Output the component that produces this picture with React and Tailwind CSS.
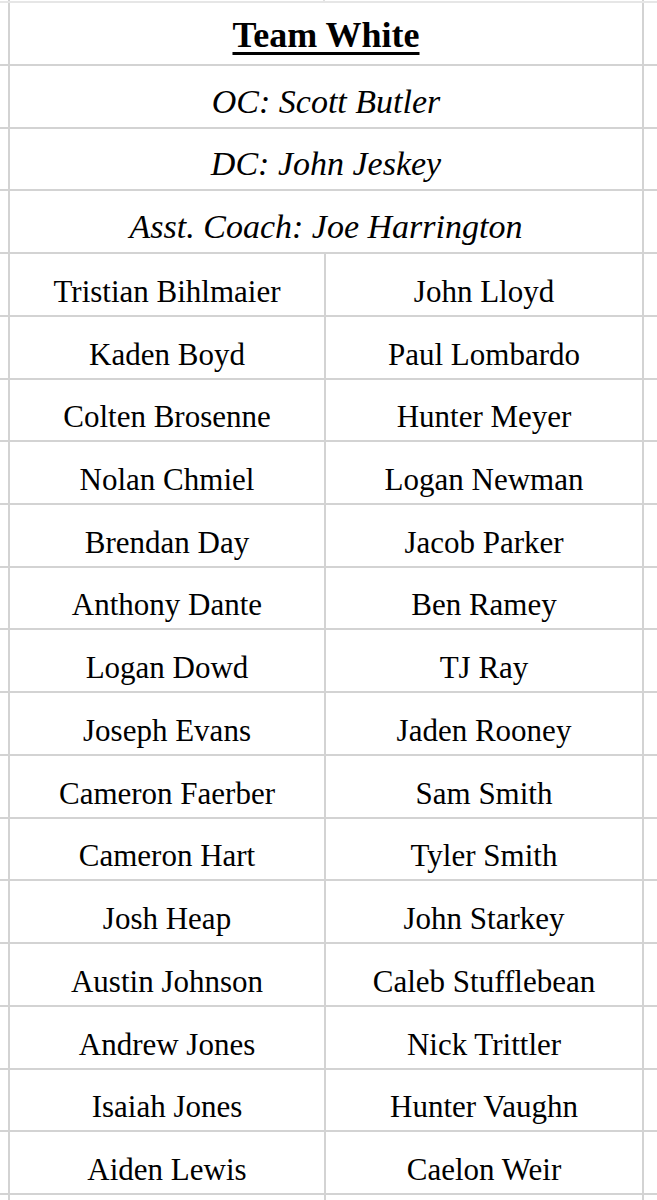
const coaches = ['OC: Scott Butler', 'DC: John Jeskey', 'Asst. Coach: Joe Harrington'];

const players = [
  ['Tristian Bihlmaier', 'John Lloyd'],
  ['Kaden Boyd', 'Paul Lombardo'],
  ['Colten Brosenne', 'Hunter Meyer'],
  ['Nolan Chmiel', 'Logan Newman'],
  ['Brendan Day', 'Jacob Parker'],
  ['Anthony Dante', 'Ben Ramey'],
  ['Logan Dowd', 'TJ Ray'],
  ['Joseph Evans', 'Jaden Rooney'],
  ['Cameron Faerber', 'Sam Smith'],
  ['Cameron Hart', 'Tyler Smith'],
  ['Josh Heap', 'John Starkey'],
  ['Austin Johnson', 'Caleb Stufflebean'],
  ['Andrew Jones', 'Nick Trittler'],
  ['Isaiah Jones', 'Hunter Vaughn'],
  ['Aiden Lewis', 'Caelon Weir'],
];

// one spreadsheet row: stub of the column to the left, the merged cell, stub on the right
function Row({ className = 'h-[62.72px]', children }) {
  return (
    <div className={`flex shrink-0 border-b-2 border-[#d3d3d3] ${className}`}>
      <div className="w-[8px] shrink-0" />
      <div className="flex flex-1 border-x-2 border-[#d3d3d3]">{children}</div>
      <div className="w-[13px] shrink-0" />
    </div>
  );
}

export default function App() {
  return (
    <div
      className="flex h-[1200px] w-[657px] flex-col overflow-hidden bg-white text-black"
      style={{ fontFamily: '"Liberation Serif", "Times New Roman", serif' }}
    >
      {/* top edge of the sheet */}
      <div className="flex h-[3px] shrink-0 border-b-2 border-[#e6e6e6]">
        <div className="w-[8px] shrink-0" />
        <div className="flex flex-1 border-x-2 border-[#d3d3d3]">
          <div className="w-[315px] border-r-2 border-[#e0e0e0]" />
        </div>
        <div className="w-[13px] shrink-0" />
      </div>

      <Row className="h-[63px]">
        <div className="flex flex-1 items-end justify-center pb-[11px] text-[36px] font-bold leading-none underline decoration-[3px] underline-offset-[5px]">
          Team White
        </div>
      </Row>

      {coaches.map(c => (
        <Row key={c}>
          <div className="flex flex-1 items-end justify-center pb-[8px] text-[34px] italic leading-none">
            {c}
          </div>
        </Row>
      ))}

      {players.map(([a, b]) => (
        <Row key={a}>
          <div className="flex w-[316px] shrink-0 items-end justify-center border-r-2 border-[#d3d3d3] pb-[8px] text-[31px] leading-none">
            {a}
          </div>
          <div className="flex flex-1 items-end justify-center pb-[8px] text-[31px] leading-none">
            {b}
          </div>
        </Row>
      ))}

      {/* next rows of the sheet, cut off */}
      <div className="flex flex-1">
        <div className="w-[8px] shrink-0" />
        <div className="flex flex-1 border-x-2 border-[#d3d3d3]">
          <div className="w-[316px] border-r-2 border-[#d3d3d3]" />
        </div>
        <div className="w-[13px] shrink-0" />
      </div>
    </div>
  );
}
